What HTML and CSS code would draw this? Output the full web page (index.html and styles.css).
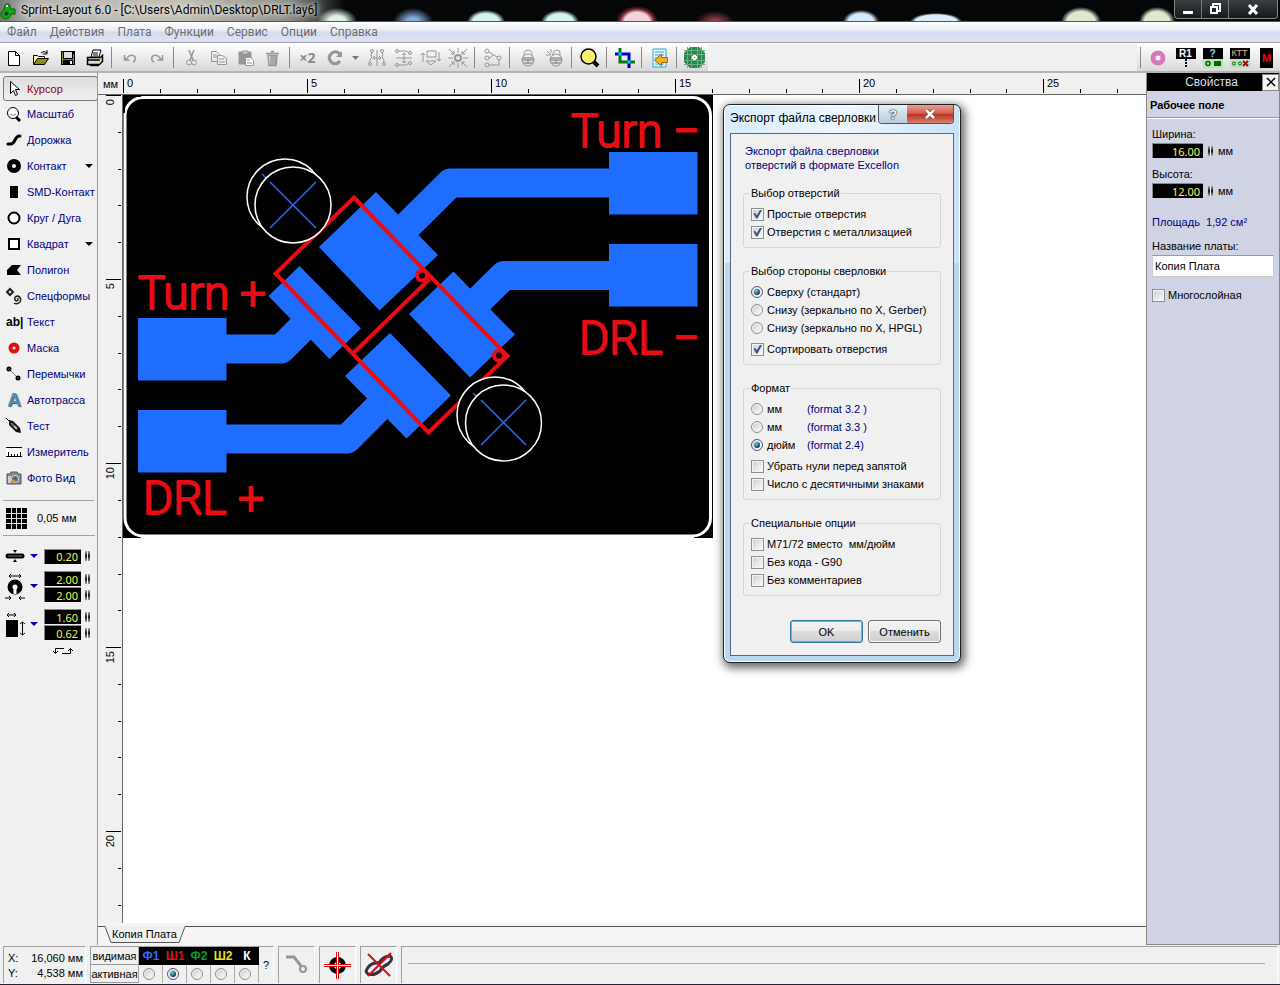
FILE: index.html
```html
<!DOCTYPE html>
<html lang="ru">
<head>
<meta charset="utf-8">
<title>Sprint-Layout 6.0</title>
<link rel="stylesheet" href="styles.css">
</head>
<body>
<header class="titlebar">
  <svg class="app-icon" width="17" height="18" viewBox="0 0 17 18"><path d="M6 2h3q1 3 2 5h4v5h-4q-1 5-5 5-5 0-5-5 0-3 3-4 0-4 2-6z" fill="#12a812" stroke="#046004"/><circle cx="6.500" cy="11.500" r="2" fill="#032"/><path d="M6 4h2" stroke="#bfb" stroke-width="2"/></svg>
  <h1 class="app-title">Sprint-Layout 6.0 - [C:\Users\Admin\Desktop\DRLT.lay6]</h1>
  <div class="win-buttons">
    <button class="win-btn" aria-label="Свернуть"><svg width="12" height="12"><path d="M1 8h10v3H1z" fill="#fff"/></svg></button>
    <button class="win-btn" aria-label="Развернуть"><svg width="12" height="12" fill="none" stroke="#fff" stroke-width="2"><path d="M4 3V1h7v7H9M2 4h6v6H2z"/></svg></button>
    <button class="win-btn win-btn-wide" aria-label="Закрыть"><svg width="12" height="12"><path d="M2 2l8 9M10 2l-8 9" stroke="#fff" stroke-width="3"/></svg></button>
  </div>
</header>
<nav class="menubar">
  <button>Файл</button><button>Действия</button><button>Плата</button><button>Функции</button><button>Сервис</button><button>Опции</button><button>Справка</button>
</nav>
<div class="toolbar">
  <div class="tool-group">
    <button aria-label="Новый"><svg width="20" height="20"><path d="M4.500 3.500h7l4 4v10h-11zM11.500 3.500v4h4" fill="#fff" stroke="#000"/></svg></button>
    <button aria-label="Открыть"><svg width="20" height="20"><path d="M2.500 16.500v-9h4l1 1h6v3" fill="#f8f89a" stroke="#000"/><path d="M2.500 16.500l4-6h11l-4 6z" fill="#8c8c1c" stroke="#000"/><path d="M10 5q3-3 6 0m0-3v4h-4" fill="none" stroke="#000"/></svg></button>
    <button aria-label="Сохранить"><svg width="20" height="20"><path d="M3 3h14v14H3z" fill="#000"/><path d="M4.500 4v12M15.500 6v10" stroke="#8c8c1c"/><path d="M6 4h8v6H6z" fill="#ddd"/><path d="M4 11h12v1H4z" fill="#8c8c1c"/><path d="M12 13h2v3h-2z" fill="#fff"/></svg></button>
    <button aria-label="Печать"><svg width="20" height="20"><path d="M6 9l2-7h8l-2 7z" fill="#fff" stroke="#000"/><path d="M8 5h5M8 7h5" stroke="#000"/><path d="M2.500 9.500h13l2-2v6l-3 3h-12z" fill="#ddd" stroke="#000" stroke-width="1.500"/><path d="M3 12h12M5 17.500h9" stroke="#000" stroke-width="1.500"/><path d="M10 14h3" stroke="#dd0"/></svg></button>
    <i class="sep"></i>
    <button aria-label="Отменить действие"><svg class="dim" width="20" height="20"><path d="M4.500 7v5h5M5 12l4-4q4-2 6 1 1 4-2 5" stroke-width="1.500"/></svg></button>
    <button aria-label="Повторить"><svg class="dim" width="20" height="20"><path d="M15.500 7v5h-5M15 12l-4-4q-4-2-6 1-1 4 2 5" stroke-width="1.500"/></svg></button>
    <i class="sep"></i>
    <button aria-label="Вырезать"><svg class="dim" width="20" height="20"><path d="M7 2l4 10M12 2l-4 10" stroke-width="1.500"/><circle cx="7" cy="14.500" r="2.500"/><circle cx="12" cy="14.500" r="2.500"/></svg></button>
    <button aria-label="Копировать"><svg class="dim" width="20" height="20"><path d="M2.500 3.500h5l3 3v7h-8zM4 7h4M4 9h4"/><path d="M8.500 7.500h5l4 3v6h-9z" fill="#eee"/><path d="M10 11h5M10 14h6"/></svg></button>
    <button aria-label="Вставить"><svg class="dim" width="20" height="20"><path d="M3 4h12v12H3z" fill="#969696"/><path d="M6 3h6v3H6z" fill="#ccc"/><path d="M9.500 9.500h5l3 3v5h-8z" fill="#fff"/><path d="M11 12h3M11 15h5"/></svg></button>
    <button aria-label="Удалить"><svg class="dim" width="20" height="20"><path d="M3 5.500h13M8 3.500h3M5 7.500h9l-1 10H6zM8 8v9M10 8v9M12 8v9" stroke-width="1.500"/></svg></button>
    <i class="sep"></i>
    <button class="double">×2</button>
    <button aria-label="Повернуть"><svg class="dim" width="20" height="20"><path d="M15 6q-4-4-8-1-5 4-1 9 5 4 9-1" stroke-width="3"/><path d="M17 3v6h-6z" fill="#969696" stroke="none"/></svg></button>
    <button class="drop" aria-label="Угол"><svg width="9" height="6"><path d="M1 1h7l-3.500 4z" fill="#777"/></svg></button>
    <button aria-label="Отразить по горизонтали"><svg class="dim" width="20" height="20"><path d="M10 2v16M6 10h8M8 8l-2 2 2 2M12 8l2 2-2 2M5 4q-2 3 0 5-3 3-2 6M15 4q2 3 0 5 3 3 2 6"/><circle cx="5" cy="3" r="1.500"/><circle cx="15" cy="3" r="1.500"/><circle cx="3" cy="16" r="1.500"/><circle cx="17" cy="16" r="1.500"/></svg></button>
    <button aria-label="Отразить по вертикали"><svg class="dim" width="20" height="20"><path d="M2 10h16M10 5v10M8 7l2-2 2 2M8 13l2 2 2-2M4 3h8l3 2M4 17h8l3-2"/><circle cx="3" cy="3" r="1.500"/><circle cx="16" cy="5" r="1.500"/><circle cx="3" cy="17" r="1.500"/><circle cx="16" cy="15" r="1.500"/></svg></button>
    <button aria-label="На другую сторону"><svg class="dim" width="20" height="20"><path d="M6 3h9v6H6zM2 14V5M0 7l2-2 2 2M18 4v9M16 11l2 2 2-2M5 13h10l-5 4z"/></svg></button>
    <button aria-label="Привязать"><svg class="dim" width="20" height="20"><circle cx="10" cy="10" r="3" stroke-width="2"/><path d="M0 10h5M15 10h5M10 0v5M10 15v5M1 1l5 5m0-3v3H3M19 1l-5 5m0-3v3h3M1 19l5-5m-3 0h3v3M19 19l-5-5m3 0h-3v3"/></svg></button>
    <i class="sep"></i>
    <button aria-label="Соединения"><svg class="dim" width="20" height="20"><circle cx="4" cy="3" r="2"/><circle cx="4" cy="10" r="2"/><circle cx="4" cy="17" r="2"/><circle cx="16" cy="10" r="2"/><path d="M6 4l8 5M6 10q3-1 4-3M6 17h10v-5"/></svg></button>
    <i class="sep"></i>
    <button aria-label="Группировать"><svg class="dim" width="20" height="20"><path d="M6 8V5q1-3 4-3t4 3v3"/><circle cx="10" cy="12" r="6"/><path d="M4 10h12M4 12h12M5 15h10M10 12v4" stroke-width="1.500"/></svg></button>
    <button aria-label="Разгруппировать"><svg class="dim" width="20" height="20"><path d="M8 8V5q1-3 4-3t3 3v3M2 3l4 4M1 7h4M6 1v4"/><circle cx="11" cy="12" r="6"/><path d="M5 10h12M5 12h12M6 15h10M11 12v4" stroke-width="1.500"/></svg></button>
    <i class="sep"></i>
    <button aria-label="Масштаб"><svg width="22" height="22"><path d="M14 14l5 5" stroke="#000" stroke-width="4"/><circle cx="9.500" cy="9.500" r="7.500" fill="#f6f06c" stroke="#000" stroke-width="1.500"/></svg></button>
    <i class="sep"></i>
    <button aria-label="Обрезать"><svg width="20" height="20" fill="none" stroke-width="3"><path d="M0 6h14v9" stroke="#00d"/><path d="M5 0v14h15" stroke="#087808"/><path d="M14 14v6" stroke="#00a"/><path d="M3.500 6h3M12.500 14h3" stroke="#0cf"/></svg></button>
    <i class="sep"></i>
    <button aria-label="Импорт"><svg width="20" height="20"><path d="M3 1h13v18H3z" fill="#dff6ff" stroke="#29a9dc"/><path d="M5 4h9M5 7h9M5 10h9M5 13h9M5 16h9" stroke="#29a9dc"/><path d="M4.500 12l7-6v3.500h6v5h-6V18z" fill="#f2b01e" stroke="#a66a00"/></svg></button>
    <i class="sep"></i>
    <button aria-label="Сетка меди"><svg width="21" height="21"><path d="M6 0h9l6 6v9l-6 6H6l-6-6V6z" fill="#24894a"/><path d="M0 3.500h21M0 7.500h21M0 13.500h21M0 17.500h21M3.500 0v21M7.500 0v21M13.500 0v21M17.500 0v21" stroke="#6fae87"/><path d="M8 9h5v3H8zM9 8h3v5H9z" fill="#fff"/><path d="M10 10h1v1h-1z" fill="#24894a"/></svg></button>
  </div>
  <div class="tool-group tool-group-right">
    <i class="sep"></i>
    <button aria-label="Контакты"><svg width="18" height="18"><circle cx="8" cy="9" r="5" fill="#fff" stroke="#d878b8" stroke-width="5"/></svg></button>
    <button class="badge" aria-label="R1"><b>R1</b><svg width="20" height="9"><path d="M9 0h2v2H9zM9 3h2v2H9zM9 6h2v2H9z"/></svg></button>
    <button class="badge" aria-label="Свойства"><b class="badge-q">?</b><svg width="20" height="9"><path d="M0 0h20v9H0z" fill="#b4e4b4"/><circle cx="5" cy="4.500" r="2" fill="none" stroke="#060" stroke-width="1.500"/><path d="M11 2h7v5h-7z" fill="#060"/></svg></button>
    <button class="badge" aria-label="КТТ"><b class="badge-k">КТТ</b><svg width="20" height="9"><path d="M0 0h20v9H0z" fill="#c4dcc4"/><circle cx="4" cy="4.500" r="1.500" fill="none" stroke="#060"/><circle cx="10" cy="4.500" r="1.500" fill="none" stroke="#060"/><path d="M13 2l5 5m0-5l-5 5" stroke="#b00" stroke-width="2"/></svg></button>
    <button class="macro" aria-label="Макросы"><b>М</b></button>
  </div>
</div>
<main class="workspace">
  <aside class="sidebar">
    <div class="tools">
      <button class="tool tool-active"><svg width="16" height="18"><path d="M4.500 1.500v12l3-3 2 5 2-1-2-5h4z" fill="#fff" stroke="#000"/></svg><span>Курсор</span></button>
      <button class="tool"><svg width="16" height="16" fill="none" stroke="#000"><circle cx="7" cy="7" r="5.500" fill="#fff"/><path d="M10 11l4 4" stroke-width="3"/><path d="M4 8q3 3 6 0" stroke="#888"/></svg><span>Масштаб</span></button>
      <button class="tool"><svg width="16" height="16"><path d="M2 12h3q2 0 4-4t4-4h1" fill="none" stroke="#000" stroke-width="3" stroke-linecap="round"/></svg><span>Дорожка</span></button>
      <button class="tool"><svg width="16" height="16"><circle cx="8" cy="8" r="4.500" fill="#fff" stroke="#000" stroke-width="5"/></svg><span>Контакт</span><svg class="more" width="8" height="5"><path d="M0 0h8L4 4z"/></svg></button>
      <button class="tool"><svg width="16" height="16"><path d="M4 2h8v12H4z"/></svg><span>SMD-Контакт</span></button>
      <button class="tool"><svg width="16" height="16"><circle cx="8" cy="8" r="5.500" fill="#fff" stroke="#000" stroke-width="2"/></svg><span>Круг / Дуга</span></button>
      <button class="tool"><svg width="16" height="16"><path d="M3 3h10v10H3z" fill="#fff" stroke="#000" stroke-width="2"/></svg><span>Квадрат</span><svg class="more" width="8" height="5"><path d="M0 0h8L4 4z"/></svg></button>
      <button class="tool"><svg width="16" height="16"><path d="M1 8l5-5h9l-4 5 4 5H1z"/></svg><span>Полигон</span></button>
      <button class="tool"><svg width="16" height="18" fill="none" stroke="#222" stroke-width="1.500"><path d="M4 2l3 3-3 3-3-3z" stroke-width="2"/><path d="M11 12q1-1 1 1-1 2-3 0-1-4 3-4 4 2 2 6-3 3-6 1"/></svg><span>Спецформы</span></button>
      <button class="tool"><b class="tool-ab">ab|</b><span>Текст</span></button>
      <button class="tool"><svg width="16" height="16"><circle cx="8" cy="8" r="3.500" fill="#fff" stroke="#e01010" stroke-width="4"/></svg><span>Маска</span></button>
      <button class="tool"><svg width="16" height="16" fill="#fff" stroke="#000"><path d="M4 4l8 8" stroke="#777"/><circle cx="3" cy="3" r="1.500" stroke-width="2"/><circle cx="12" cy="12" r="1.500" stroke-width="2"/></svg><span>Перемычки</span></button>
      <button class="tool"><b class="tool-a">A</b><span>Автотрасса</span></button>
      <button class="tool"><svg width="16" height="16"><path d="M0 0l5 5" stroke="#000"/><path d="M3 2l4 1 7 7 1 5-5-1-7-7z" fill="#111"/><path d="M5 5l3 3" stroke="#2a9a3a" stroke-width="2"/><path d="M8 8l3 3" stroke="#d8b0b0" stroke-width="2"/></svg><span>Тест</span></button>
      <button class="tool"><svg width="16" height="12" stroke="#000"><path d="M0 1h16v9H0z" fill="#fff" stroke="none"/><path d="M0 1.500h16M0 10.500h16M2.500 6v4M5.500 8v2M8.500 8v2M11.500 8v2M14.500 6v4"/></svg><span>Измеритель</span></button>
      <button class="tool"><svg width="16" height="14"><path d="M4 3l1-2h6l1 2h3v10H1V3z" fill="#8a8a90" stroke="#555"/><path d="M2 5h3v7H2z" fill="#ccc"/><circle cx="9" cy="8" r="3.500" fill="#567" stroke="#ddd"/><circle cx="8" cy="10" r="1.500" fill="#c90"/></svg><span>Фото Вид</span></button>
    </div>
    <button class="grid-size"><svg width="21" height="21"><path d="M0 0h21v21H0z"/><path d="M0 5.500h21M0 10.500h21M0 15.500h21M5.500 0v21M10.500 0v21M15.500 0v21" stroke="#ddd"/></svg><span>0,05 мм</span></button>
    <div class="params">
      <div class="param">
        <svg width="20" height="16"><path d="M3 8h14" stroke="#000" stroke-width="5" stroke-linecap="round"/><path d="M3 8h14" stroke="#666"/><path d="M8 2h4l-2 3zM8 14h4l-2-3z"/></svg>
        <svg class="blue" width="8" height="5"><path d="M0 0h8L4 4z"/></svg>
        <div class="fields"><label><input class="num" value="0.20" aria-label="Ширина дорожки"><i class="spin"></i></label></div>
      </div>
      <div class="param">
        <svg width="20" height="28" fill="none" stroke="#000"><path d="M4 3h12M6 1L4 3l2 2M14 1l2 2-2 2M0 25h6M4 23l2 2-2 2M20 25h-6M16 23l-2 2 2 2"/><circle cx="10" cy="14" r="5" fill="#fff" stroke-width="5"/><path d="M10 13v8" stroke="#fff" stroke-width="3"/></svg>
        <svg class="blue" width="8" height="5"><path d="M0 0h8L4 4z"/></svg>
        <div class="fields"><label><input class="num" value="2.00" aria-label="Внешний диаметр"><i class="spin"></i></label><label><input class="num" value="2.00" aria-label="Отверстие"><i class="spin"></i></label></div>
      </div>
      <div class="param">
        <svg width="20" height="26"><path d="M1 8h12v17H1z"/><path d="M2 3h9M4 1L2 3l2 2M9 1l2 2-2 2M17.500 10v13M15 12l2.500-2 2.500 2M15 21l2.500 2 2.500-2" fill="none" stroke="#000"/></svg>
        <svg class="blue" width="8" height="5"><path d="M0 0h8L4 4z"/></svg>
        <div class="fields"><label><input class="num" value="1.60" aria-label="Ширина SMD"><i class="spin"></i></label><label><input class="num" value="0.62" aria-label="Высота SMD"><i class="spin"></i></label></div>
      </div>
      <button class="swap" aria-label="Поменять"><svg width="22" height="8" fill="none" stroke="#000"><path d="M12 1.500H3.500V6M1 4l2.500 2.500L6 4M10 6.500h8.500V2M16 4l2.500-2.500L21 4"/></svg></button>
    </div>
  </aside>
  <section class="editor">
    <div class="ruler-top">
      <span class="unit">мм</span>
      <svg class="ruler-h" height="21" viewBox="123 74 1024 21" width="1024">
        <path d="M123.500 80v14M307.500 80v14M491.500 80v14M675.500 80v14M859.500 80v14M1043.500 80v14M160.500 90v4M197.500 90v4M234.500 90v4M270.500 90v4M344.500 90v4M381.500 90v4M418.500 90v4M454.500 90v4M528.500 90v4M565.500 90v4M602.500 90v4M638.500 90v4M712.500 90v4M749.500 90v4M786.500 90v4M822.500 90v4M896.500 90v4M933.500 90v4M970.500 90v4M1006.500 90v4M1080.500 90v4M1117.500 90v4" stroke="#000"/>
        <text x="127" y="88">0</text><text x="311" y="88">5</text><text x="495" y="88">10</text><text x="679" y="88">15</text><text x="863" y="88">20</text><text x="1047" y="88">25</text>
      </svg>
    </div>
    <div class="editor-row">
      <svg class="ruler-v" width="24" height="828" viewBox="98 95 24 828">
        <path d="M106 95.500h15M106 279.500h15M106 463.500h15M106 647.500h15M106 831.500h15M118 132.500h3M118 169.500h3M118 205.500h3M118 242.500h3M118 316.500h3M118 353.500h3M118 389.500h3M118 426.500h3M118 500.500h3M118 537.500h3M118 574.500h3M118 610.500h3M118 684.500h3M118 721.500h3M118 757.500h3M118 794.500h3M118 868.500h3M118 905.500h3" stroke="#000"/>
        <g text-anchor="end"><text transform="translate(114 99) rotate(-90)">0</text><text transform="translate(114 283) rotate(-90)">5</text><text transform="translate(114 467) rotate(-90)">10</text><text transform="translate(114 651) rotate(-90)">15</text><text transform="translate(114 835) rotate(-90)">20</text></g>
      </svg>
      <div class="canvas">
        <svg class="board" width="590" height="443" viewBox="123 95 590 443">
          <path d="M123 95h590v443H123z"/>
          <path d="M141 535.500h553v3H141z" fill="#fff"/>
          <rect x="125" y="97.500" width="585.500" height="438.500" rx="18" fill="#000" stroke="#fff" stroke-width="3"/>
          <path d="M124 113V96h17" fill="none" stroke="#000" stroke-width="2"/>
          <g fill="#1e6dff">
            <path d="M609 152h88.500v62.500H609zM609 244h88.500v62.500H609zM138 318h88.500v62.500H138zM138 410h88.500v62.500H138z"/>
            <path d="M376 192l62 63-58.500 55.500-60.500-63.500zM453.500 271.500l61.500 63-45 43-61-63.500zM299.500 266l61.500 62.500-31.500 30.500-61-63zM390 333l61 62.500-44.500 43-61.500-62.500z"/>
          </g>
          <path d="M612 183H450.500L398 235M612 275.500H504L468 311M224 349h57l36-36M224 439h123l38-38" fill="none" stroke="#1e6dff" stroke-width="29" stroke-linejoin="round"/>
          <g fill="none" stroke="#e80c14" stroke-width="4"><path d="M354 197.500L507.500 356l-79 76.500L275.500 273.500zM353.500 353l76-74"/><circle cx="422" cy="275.500" r="5" fill="#000"/><circle cx="499" cy="355.500" r="5" fill="#000"/></g>
          <g stroke="#fff" stroke-width="1.500"><circle cx="285" cy="197" r="38"/><circle cx="495" cy="415" r="38"/></g>
          <path d="M262 174l8 8M473 393l6 6" stroke="#2a6ff0" stroke-width="1.500"/>
          <g stroke="#fff" stroke-width="1.500"><circle cx="293" cy="205" r="38"/><circle cx="503.500" cy="423" r="38"/></g>
          <path d="M270 182l46 46M316 182l-46 46M481 400l45 45M526 400l-45 45" stroke="#2a6ff0" stroke-width="1.500"/>
          <g class="silk">
            <text x="571" y="147">Turn</text><text x="673" y="147">−</text>
            <text x="579" y="354">DRL</text><text x="673" y="354">−</text>
            <text x="138" y="309">Turn</text><text x="240" y="309">+</text>
            <text x="143" y="514">DRL</text><text x="238" y="514">+</text>
          </g>
        </svg>
      </div>
    </div>
    <div class="tabs">
      <i class="tab-edge"></i>
      <svg width="7" height="17"><path d="M0 0h0l6 17h1V0z" fill="#f0f0f0"/><path d="M0 .5l6 16h1" fill="none" stroke="#555"/></svg>
      <button class="tab">Копия Плата</button>
      <svg width="7" height="17"><path d="M0 0v17l6-17z" fill="#f0f0f0"/><path d="M0 16.500h1l6-16" fill="none" stroke="#555"/></svg>
      <i class="tab-line"></i>
    </div>
    <form class="dialog" onsubmit="return false">
      <div class="dialog-head"><h2>Экспорт файла сверловки</h2>
        <div class="dialog-ctl"><button type="button" class="help" aria-label="Справка">?</button><button type="button" class="close" aria-label="Закрыть"><svg width="12" height="10"><path d="M2 1l8 8M10 1L2 9" stroke="#644" stroke-width="4"/><path d="M2 1l8 8M10 1L2 9" stroke="#fff" stroke-width="2.500"/></svg></button></div>
      </div>
      <div class="dialog-body">
        <p class="lead">Экспорт файла сверловки<br>отверстий в формате Excellon</p>
        <fieldset><legend>Выбор отверстий</legend>
          <label><input type="checkbox" checked>Простые отверстия</label>
          <label><input type="checkbox" checked>Отверстия с металлизацией</label>
        </fieldset>
        <fieldset><legend>Выбор стороны сверловки</legend>
          <label><input type="radio" name="side" checked>Сверху (стандарт)</label>
          <label><input type="radio" name="side">Снизу (зеркально по X, Gerber)</label>
          <label><input type="radio" name="side">Снизу (зеркально по X, HPGL)</label>
          <label class="spaced"><input type="checkbox" checked>Сортировать отверстия</label>
        </fieldset>
        <fieldset><legend>Формат</legend>
          <label><input type="radio" name="fmt"><span class="fmt">мм</span><span class="navy">(format 3.2 )</span></label>
          <label><input type="radio" name="fmt"><span class="fmt">мм</span><span class="navy">(format 3.3 )</span></label>
          <label><input type="radio" name="fmt" checked><span class="fmt">дюйм</span><span class="navy">(format 2.4)</span></label>
          <label class="spaced"><input type="checkbox">Убрать нули перед запятой</label>
          <label><input type="checkbox">Число с десятичными знаками</label>
        </fieldset>
        <fieldset><legend>Специальные опции</legend>
          <label><input type="checkbox">M71/72 вместо&nbsp; мм/дюйм</label>
          <label><input type="checkbox">Без кода - G90</label>
          <label><input type="checkbox">Без комментариев</label>
        </fieldset>
        <div class="actions"><button class="btn btn-default">OK</button><button class="btn" type="button">Отменить</button></div>
      </div>
    </form>
  </section>
  <aside class="props">
    <div class="props-head"><h2>Свойства</h2><button aria-label="Закрыть панель"><svg width="10" height="10"><path d="M1 1l8 8M9 1L1 9" stroke="#000" stroke-width="1.500"/></svg></button></div>
    <h3>Рабочее поле</h3>
    <div class="props-body">
      <label for="w">Ширина:</label>
      <div class="measure"><input class="num" id="w" value="16.00"><i class="spin"></i><span>мм</span></div>
      <label for="h">Высота:</label>
      <div class="measure"><input class="num" id="h" value="12.00"><i class="spin"></i><span>мм</span></div>
      <p class="area"><span>Площадь</span><span>1,92 см²</span></p>
      <label for="n">Название платы:</label>
      <input class="name" id="n" value="Копия Плата">
      <label class="multi"><input type="checkbox">Многослойная</label>
    </div>
  </aside>
</main>
<footer class="status">
  <div class="cell coords"><span>X:</span><span>16,060 мм</span><span>Y:</span><span>4,538 мм</span></div>
  <div class="cell layers">
    <span class="lname">видимая</span>
    <b class="l1">Ф1</b><b class="l2">Ш1</b><b class="l3">Ф2</b><b class="l4">Ш2</b><b class="l5">К</b>
    <button class="ask">?</button>
    <span class="lname">активная</span>
    <label><input type="radio" name="layer" aria-label="Ф1"></label><label><input type="radio" name="layer" aria-label="Ш1" checked></label><label><input type="radio" name="layer" aria-label="Ф2"></label><label><input type="radio" name="layer" aria-label="Ш2"></label><label><input type="radio" name="layer" aria-label="К"></label>
  </div>
  <button class="cell mode" aria-label="Резинка"><svg width="26" height="24" fill="none" stroke="#969696" stroke-width="3"><path d="M2 4h8l7 9"/><circle cx="19" cy="16" r="3" stroke-width="2"/></svg></button>
  <button class="cell mode" aria-label="Прицел"><svg width="27" height="27"><circle cx="13.500" cy="13.500" r="6" fill="none" stroke="#000" stroke-width="5"/><path d="M12.500 0v27M14.500 0v27M0 12.500h27M0 14.500h27" stroke="#d00"/><path d="M13.500 0v27M0 13.500h27" stroke="#fff"/></svg></button>
  <button class="cell mode" aria-label="Проверка"><svg width="30" height="28" fill="none"><path d="M3 18q4-7 12-6 4-7 11-7 4 3-2 8-5 2-8 7-6 5-12 3-3-2-1-5z" stroke="#334" stroke-width="3"/><path d="M4 3l22 22M27 2L4 25" stroke="#d01018" stroke-width="2"/></svg></button>
  <div class="cell message"><i></i></div>
</footer>
</body>
</html>
```

FILE: styles.css
```css
* { box-sizing: border-box; }
html, body { height: 100%; }
body {
  margin: 0;
  display: flex;
  flex-direction: column;
  font: 11px/14px "Liberation Sans", Arial, sans-serif;
  color: #000;
  background: #f0f0f0;
  overflow: hidden;
}
button { font: inherit; color: inherit; background: none; border: 0; padding: 0; margin: 0; }
h1, h2, h3, p { margin: 0; font-size: inherit; font-weight: normal; }
input { font: inherit; margin: 0; }
svg { display: block; flex: none; }

/* Title bar */
.titlebar {
  flex: none;
  display: flex;
  height: 22px;
  padding-right: 2px;
  align-items: center;
  border-bottom: 1px solid #555;
  background:
    radial-gradient(ellipse 20px 13px at 337px 21px, #dff0e6 40%, transparent),
    radial-gradient(ellipse 20px 14px at 413px 22px, #86a8dc 30%, transparent),
    radial-gradient(ellipse 19px 12px at 486px 22px, #d4f2ee 70%, transparent),
    radial-gradient(ellipse 19px 12px at 560px 22px, #d4f2ee 70%, transparent),
    radial-gradient(ellipse 21px 16px at 637px 22px, #f2d5dc 60%, #7a2630 80%, transparent),
    radial-gradient(ellipse 19px 11px at 715px 22px, #90404c 20%, transparent),
    radial-gradient(ellipse 18px 12px at 861px 22px, #d4eafc 70%, transparent),
    radial-gradient(ellipse 26px 9px at 936px 22px, #dcecf8 80%, transparent),
    radial-gradient(ellipse 20px 15px at 1081px 22px, #dde8d0 70%, transparent),
    radial-gradient(ellipse 18px 15px at 1157px 22px, #dde8d0 70%, transparent),
    linear-gradient(90deg, #777, #b4b4b0 30px, #c4c0b4 180px, #8d8d88 290px, #040608 345px, #040608);
}
.app-icon { margin: 0 4px 0 0; }
.app-title { flex: 1; font: 12px/21px "Roboto", "Noto Sans", sans-serif; white-space: nowrap; text-shadow: 0 0 5px #fff, 0 0 7px #ddd; }
.win-buttons { display: flex; align-self: flex-start; height: 19px; border: 1px solid #888; border-top: 0; border-radius: 0 0 4px 4px; background: linear-gradient(#3c3f42, #16181a); }
.win-btn { width: 27px; display: grid; place-items: center; border-right: 1px solid #777; }
.win-btn-wide { width: 48px; border: 0; }

/* Menu */
.menubar {
  flex: none;
  display: flex;
  gap: 13px;
  height: 21px;
  padding: 0 7px;
  font: 12px/20px "Roboto", "Noto Sans", sans-serif;
  color: #6d6d6d;
  background: linear-gradient(#fff, #e8ecf6 45%, #d5dbed 50%, #dfe4f3);
  border-bottom: 1px solid #a0a0a8;
}

/* Toolbar */
.toolbar { flex: none; display: flex; justify-content: space-between; height: 30px; border-top: 1px solid #fff; border-bottom: 2px solid #b4b4b4; }
.tool-group { display: flex; background: linear-gradient(#fff, #d8d8d8); }
.tool-group button { width: 27px; display: grid; place-items: center; }
.tool-group .drop { width: 15px; }
.sep { width: 8px; padding: 3px; }
.sep::before { content: ""; display: block; width: 1px; height: 21px; background: #888; }
.dim { fill: none; stroke: #969696; stroke-width: 1; }
.tool-group .double { font: bold 14px/20px "Open Sans", sans-serif; color: #888; }
.tool-group .badge { align-content: center; }
.badge b { width: 20px; height: 11px; font: bold 10px/11px "Liberation Sans", sans-serif; color: #fff; background: #000; }
.badge .badge-q { color: #8fd8ff; }
.badge .badge-k { font-weight: normal; font-size: 9px; color: #f0b080; }
.macro b { width: 13px; height: 20px; font: bold 11px/20px "Liberation Sans", sans-serif; color: #e00; background: #000; }

/* Sidebar */
.workspace { flex: 1; min-height: 0; display: flex; }
.sidebar { flex: none; width: 98px; padding: 2px 0 0 3px; border-right: 1px solid #999; overflow: hidden; }
.tools { display: flex; flex-direction: column; padding-bottom: 9px; margin-right: 3px; border-bottom: 1px solid #a0a0a0; }
.tool { display: flex; align-items: center; gap: 5px; height: 26px; padding-left: 3px; color: #000080; white-space: nowrap; }
.tool-active { height: 25px; margin: 1px -4px 0 0; border: 1px solid #777; border-radius: 3px; color: #900000; background: linear-gradient(#ddd, #f0f0f0); padding-left: 2px; }
.tool .more { margin-left: auto; margin-right: 1px; }
.tool-ab { width: 16px; font: bold 12px/16px "Liberation Sans", sans-serif; color: #000; }
.tool-a { width: 16px; font: bold 19px/18px "Liberation Sans", sans-serif; color: #4a93bd; text-shadow: 1px 1px 1px #456; }
.grid-size { display: flex; align-items: center; gap: 10px; width: 92px; height: 35px; padding-left: 3px; border-bottom: 1px solid #a0a0a0; }
.params { display: flex; flex-direction: column; gap: 7px; padding-top: 12px; }
.param { display: flex; align-items: center; gap: 5px; padding-left: 2px; }
.blue { fill: #00b; }
.fields { display: flex; flex-direction: column; gap: 1px; margin-left: 1px; }
.fields label { display: flex; gap: 4px; align-items: center; }
.num { width: 37px; height: 15px; padding: 0 3px 0 0; border: 1px solid #888; border-right: 0; border-bottom: 0; background: #000; color: #f4f45c; font: 11px/14px "Noto Sans", "DejaVu Sans", sans-serif; text-align: right; }
.spin { width: 5px; height: 10px; background: linear-gradient(90deg, transparent 40%, #f0f0f0 40% 60%, transparent 60%), linear-gradient(#aaa, #111, #aaa); }
.swap { align-self: flex-start; margin-left: 49px; }

/* Editor */
.editor { position: relative; flex: 1; min-width: 0; display: flex; flex-direction: column; }
.ruler-top { flex: none; display: flex; height: 22px; border-bottom: 1px solid #666; overflow: hidden; }
.unit { flex: none; width: 25px; padding: 4px 0 0 5px; font-size: 11px; }
.ruler-h, .ruler-v { font: 11px "Liberation Sans", sans-serif; }
.editor-row { flex: 1; min-height: 0; display: flex; overflow: hidden; }
.canvas { flex: 1; border-left: 1px solid #666; background: #fff; overflow: hidden; }
.silk { fill: #e80c14; stroke: #e80c14; stroke-width: 2; stroke-linejoin: round; font: 300 46px "Roboto", "Liberation Sans", sans-serif; }
.tabs { flex: none; display: flex; height: 22px; padding-top: 3px; background: #f5f5f5; }
.tab-edge { width: 7px; border-top: 1px solid #555; }
.tab { height: 17px; padding-right: 1px; line-height: 16px; background: #f0f0f0; border-bottom: 1px solid #555; white-space: nowrap; }
.tab-line { flex: 1; border-top: 1px solid #555; }

/* Export dialog floating over the canvas */
.dialog {
  position: absolute;
  left: 625px;
  top: 31px;
  width: 238px;
  padding: 0 6px 6px;
  border: 1px solid #222;
  border-radius: 7px;
  background: linear-gradient(90deg, #d8ecfb, #eef7fd 50%, #c8e2f8) 0 0 / 100% 158px no-repeat, #b9d6f2;
  box-shadow: inset 0 0 0 1px #fff, 2px 3px 10px 2px rgba(0, 0, 0, .6);
}
.dialog-head { display: flex; height: 28px; justify-content: space-between; }
.dialog-head h2 { font: 12px/27px "Liberation Sans", Arial, sans-serif; white-space: nowrap; }
.dialog-ctl { display: flex; height: 19px; border: 1px solid #555; border-top: 0; border-radius: 0 0 4px 4px; overflow: hidden; }
.help { width: 28px; font: bold 13px/17px "Liberation Sans", sans-serif; color: #fff; text-shadow: 0 0 1px #000, 0 0 2px #000; background: linear-gradient(#e8f0f6, #b8ccdc); }
.close { width: 46px; display: grid; place-items: center; background: linear-gradient(#e8a298, #d45a48 48%, #b8301c 50%, #d88070); }
.dialog-body { display: flex; flex-direction: column; gap: 16px; padding: 10px 12px 12px; border: 1px solid #55687c; background: #f0f0f0; }
.lead, .navy, .area { color: #000080; }
.lead { padding-left: 2px; margin-bottom: -2px; }
fieldset { min-width: 0; margin: 0; padding: 5px 0 6px 7px; border: 1px solid #d5d5d5; border-radius: 3px; }
legend { margin-left: -1px; padding: 0 1px; line-height: 14px; }
fieldset label { display: flex; align-items: center; gap: 3px; height: 18px; white-space: nowrap; }
fieldset .spaced { margin-top: 3px; }
.fmt { width: 37px; }
input[type="checkbox"], input[type="radio"] { appearance: none; flex: none; display: grid; place-items: center; width: 13px; height: 13px; border: 1px solid #8e8f8f; background: linear-gradient(135deg, #c8ccd0, #fff); box-shadow: inset 0 0 0 1px #f4f4f4; }
input[type="radio"] { width: 12px; height: 12px; margin-right: 1px; border-radius: 50%; }
input[type="checkbox"]:checked::before { content: ""; width: 9px; height: 9px; background: #3b5585; clip-path: polygon(5% 45%, 25% 40%, 42% 65%, 80% 0, 100% 5%, 50% 100%, 35% 100%); }
input[type="radio"]:checked { border-color: #557; }
input[type="radio"]:checked::before { content: ""; width: 6px; height: 6px; border-radius: 50%; background: radial-gradient(circle at 35% 30%, #7cc8e8, #0b3c60 70%); }
.actions { display: flex; justify-content: flex-end; gap: 5px; margin-top: 8px; }
.btn { width: 73px; height: 23px; border: 1px solid #707070; border-radius: 3px; background: linear-gradient(#f3f3f3, #ebebeb 48%, #dddddd 50%, #cfcfcf); box-shadow: inset 0 0 0 1px #fafafa; }
.btn-default { border-color: #2c78a8; box-shadow: inset 0 0 0 1px #48c4ec; }

/* Properties */
.props { flex: none; width: 134px; border: 1px solid #888; border-top: 0; background: #d0d3e4; }
.props-head { display: flex; align-items: center; height: 18px; color: #dde; background: #000; }
.props-head h2 { flex: 1; padding-left: 14px; font-size: 12px; text-align: center; }
.props-head button { width: 17px; height: 17px; display: grid; place-items: center; background: #f4f4f4; border: 1px solid #888; }
.props h3 { padding: 7px 3px 5px; font-weight: bold; border-bottom: 1px solid #999; box-shadow: 0 1px #fff; }
.props-body { display: flex; flex-direction: column; padding: 9px 5px; }
.measure { display: flex; align-items: center; gap: 5px; margin: 2px 0 9px; }
.measure .num { width: 51px; }
.area { display: flex; gap: 6px; margin: 8px 0 10px; }
.name { width: 122px; height: 22px; margin-top: 2px; padding: 0 2px; border: 1px solid #ccc; border-top-color: #999; background: #fff; }
.multi { display: flex; align-items: center; gap: 3px; margin-top: 11px; }

/* Status bar */
.status { flex: none; display: flex; gap: 4px; height: 40px; padding: 1px 2px 1px 3px; border-bottom: 1px solid #223; }
.cell { border: 1px solid #a0a0a0; border-right-color: #fff; border-bottom: 0; }
.coords { display: grid; grid-template-columns: auto 1fr; width: 83px; padding: 4px 2px 0 4px; line-height: 15px; align-content: start; }
.coords span:nth-child(even) { text-align: right; }
.layers { display: grid; grid-template: 18px 18px / 48px repeat(5, 24px) 14px; width: 184px; }
.layers > * { display: grid; place-items: center; border-right: 1px solid #aaa; }
.layers label { padding-right: 3px; }
.lname { border-bottom: 1px solid #999; white-space: nowrap; overflow: hidden; }
.layers b { font: bold 12px/18px "Liberation Sans", sans-serif; background: #000; border: 0; }
.layers input { margin: 0; }
.layers .ask { grid-row: span 2; border: 0; }
.l1 { color: #3068ff; } .l2 { color: #e01010; } .l3 { color: #00a020; } .l4 { color: #e8e020; } .l5 { color: #fff; }
.mode { width: 37px; display: grid; place-items: center; }
.message { flex: 1; display: grid; align-items: center; padding: 0 12px 4px 6px; }
.message i { border-top: 1px solid #aaa; }
```
